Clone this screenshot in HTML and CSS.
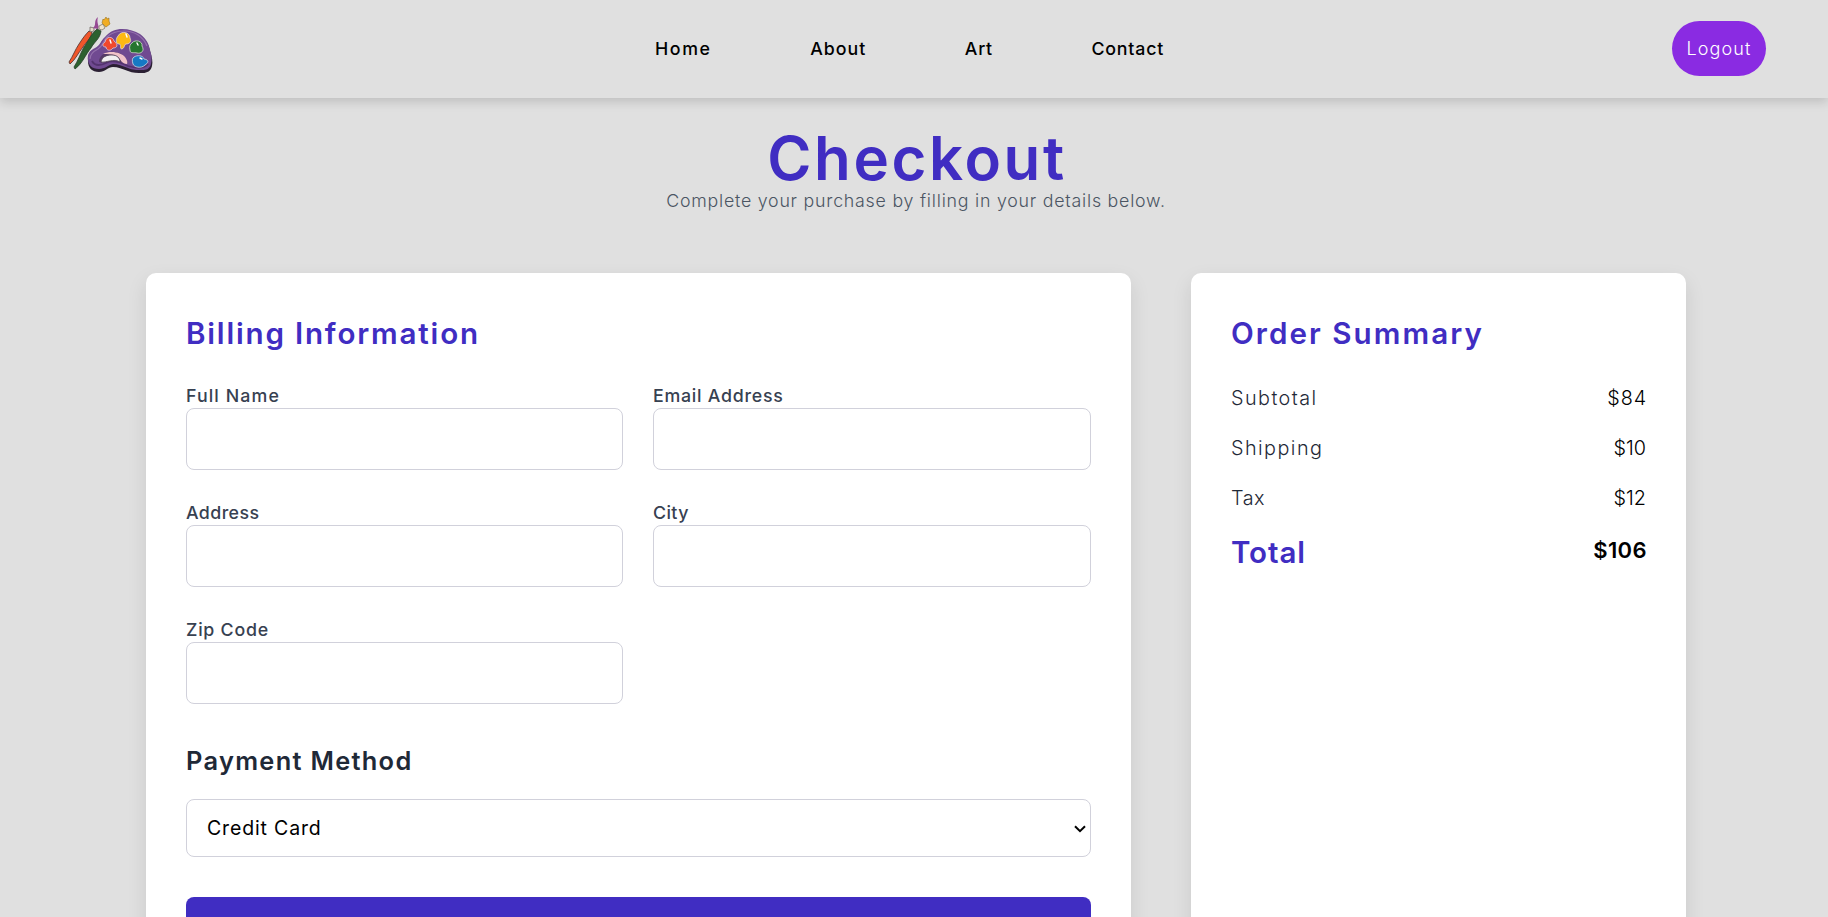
FILE: index.html
```html
<!DOCTYPE html>
<html lang="en">
<head>
<meta charset="utf-8">
<title>Checkout</title>
<link rel="stylesheet" href="styles.css">
</head>
<body>
<header class="navbar">
  <a class="logo" href="#" aria-label="Art store home">
    <svg width="86" height="58" viewBox="0 0 86 58">
      <path d="M20 45C19 38 23 35 27 33C32 31 33 25 37 22C42 16 48 14 54 14C61 14 67 16 72 19C79 24 81 30 82 35C84 41 85 46 84 50C83 55 79 57 75 57C69 57 65 57 60 55C54 53 50 51 45 51C40 51 37 56 31 56C24 56 20 52 20 45Z" fill="#2b2033"/>
      <path d="M20 43C19 37 23 34 27 32C32 30 33 24 37 21C42 15 48 13 54 13C61 13 67 15 72 18C79 23 81 29 82 34C84 40 84 44 83 48C82 53 78 54 74 54C68 54 65 54 60 52C54 50 50 48 45 48C40 49 37 53 31 53C24 53 20 49 20 43Z" fill="#704a91"/>
      <path d="M22 43C22 38 26 35 30 33C35 30 35 25 39 21C44 16 51 15 56 15C66 15 75 20 79 30" fill="none" stroke="#9470ad" stroke-width="1.2"/>
      <path d="M24 45C27 51 34 49 38 47C45 43 54 47 60 50C67 52 76 53 80 48" fill="none" stroke="#54336f" stroke-width="1.8"/>
      <path d="M31 46C31 40 37 35 46 36C54 36 58 41 60 47C54 48 50 44 46 44C41 44 38 48 31 46Z" fill="#563969"/>
      <path d="M35 38C43 34 54 37 57 41C59 44 60 46 59 48C54 48 53 44 50 41C46 38 40 38 35 38Z" fill="#f0c2c9"/>
      <path d="M33 46C34 41 38 39 44 39C49 39 52 42 52 46C46 42 38 47 33 46Z" fill="#f1eff1" stroke="#4c3f50" stroke-width=".8"/>
      <path d="M37 26C38 20 45 20 46 25C51 29 49 32 45 32C42 36 38 34 38 31C34 31 34 28 37 26Z" fill="#f1482d" stroke="#d9c9dd" stroke-width=".8"/>
      <path d="M50 20C53 14 62 16 62 22C64 26 61 28 58 28C56 28 57 32 54 33C51 33 54 28 51 28C47 28 48 22 50 20Z" fill="#fdb913" stroke="#e4d4d2" stroke-width=".8"/>
      <path d="M64 27C67 23 75 25 74 30C77 35 73 38 69 37C66 36 62 38 62 34C61 31 62 28 64 27Z" fill="#26762f" stroke="#d5d9d0" stroke-width=".8"/>
      <path d="M66 41C69 39 75 39 76 43C82 44 80 47 77 49C73 53 66 51 65 48C64 45 64 42 66 41Z" fill="#1679c4" stroke="#cbd9e5" stroke-width=".8"/>
      <path d="M42 24L43 27M58 18L59 21M69 27L70 29M72 42L74 43" fill="none" stroke="#fff" stroke-width="1.4" stroke-linecap="round"/>
      <path d="M21 15L24 16C23 23 18 26 15 31C10 37 8 43 2 48L1 46C5 40 7 34 11 28C15 22 17 19 21 15Z" fill="#f0562b" stroke="#4b312d" stroke-width=".8"/>
      <path d="M22 11L26 12L26 15L22 16Z" fill="#e7dccb" stroke="#665d58" stroke-width=".7"/>
      <path d="M25 12C29 9 25 5 30 1C28 8 32 9 30 13Z" fill="#964993"/>
      <path d="M29 13L33 15C32 23 26 26 23 32C17 39 15 47 7 53L6 51C10 45 12 38 16 31C21 24 23 18 29 13Z" fill="#2c612f" stroke="#293e2b" stroke-width=".8"/>
      <path d="M31 10L35 8L37 12L34 14L31 13Z" fill="#eee3cd" stroke="#746b59" stroke-width=".7"/>
      <path d="M34 7L35 3L36 4L38 1L39 3L41 2L41 5L42 8L38 11Z" fill="#f1ad22" stroke="#9b731c" stroke-width=".6"/>
    </svg>
  </a>
  <nav class="links">
    <a class="link home" href="#">Home</a>
    <a class="link about" href="#">About</a>
    <a class="link art" href="#">Art</a>
    <a class="link contact" href="#">Contact</a>
  </nav>
  <button class="logout">Logout</button>
</header>
<main class="page">
  <div class="intro">
    <h1 class="title">Checkout</h1>
    <p class="subtitle">Complete your purchase by filling in your details below.</p>
  </div>
  <div class="columns">
    <section class="card">
      <h2 class="heading">Billing Information</h2>
      <form>
        <div class="fields">
          <div class="field"><label class="label" for="name">Full Name</label><input class="input" id="name"></div>
          <div class="field"><label class="label email" for="email">Email Address</label><input class="input" id="email"></div>
          <div class="field"><label class="label tight" for="address">Address</label><input class="input" id="address"></div>
          <div class="field"><label class="label tight" for="city">City</label><input class="input" id="city"></div>
          <div class="field"><label class="label email" for="zip">Zip Code</label><input class="input" id="zip"></div>
        </div>
        <h3 class="subheading">Payment Method</h3>
        <div class="select-wrap">
          <select class="select"><option>Credit Card</option></select>
          <svg class="chevron" width="12" height="8" viewBox="0 0 12 8"><path d="M1 1.2L6 6.2L11 1.2" fill="none" stroke="#000" stroke-width="2"/></svg>
        </div>
        <button class="submit" type="button" aria-label="Place order"></button>
      </form>
    </section>
    <section class="card">
      <h2 class="heading order">Order Summary</h2>
      <div class="row"><span class="item">Subtotal</span><span class="price wide">$84</span></div>
      <div class="row"><span class="item">Shipping</span><span class="price">$10</span></div>
      <div class="row"><span class="item tax">Tax</span><span class="price">$12</span></div>
      <div class="row total"><span class="total-label">Total</span><span class="total-price">$106</span></div>
    </section>
  </div>
</main>
</body>
</html>
```

FILE: styles.css
```css
* { box-sizing: border-box; margin: 0; padding: 0; }
body {
  height: 917px;
  overflow: hidden;
  background: #e0e0e0;
  color: #000;
  font-family: Inter, "Liberation Sans", sans-serif;
}
.navbar {
  display: grid;
  grid-template-columns: 587px 1fr auto;
  align-items: center;
  height: 98px;
  padding: 0 62px 2px 68px;
  box-shadow: 0 4px 10px rgba(0, 0, 0, .15);
}
.logo { display: block; height: 58px; margin-top: -7px; }
.links { display: flex; gap: 98.5px; }
.link { color: #000; font-size: 17.8px; font-weight: 450; text-decoration: none; letter-spacing: 1px; }
.home { letter-spacing: 1.6px; }
.art, .contact { letter-spacing: .8px; }
.logout {
  width: 94px;
  height: 55px;
  border: 0;
  border-radius: 28px;
  background: #8a2be2;
  color: #fff;
  font-family: inherit;
  font-size: 18px;
  font-weight: 300;
  letter-spacing: 1.15px;
}
.page { width: 1540px; margin: 0 auto; position: relative; left: 2px; padding-top: 29px; }
.intro { height: 146px; text-align: center; }
.title { font-size: 60px; font-weight: 600; line-height: 62px; letter-spacing: 2.6px; text-indent: 2px; color: #402dc2; }
.subtitle { margin-top: 1px; font-size: 17.8px; font-weight: 300; line-height: 22px; letter-spacing: .77px; color: #4b5563; }
.columns { display: grid; grid-template-columns: 985px 495px; gap: 60px; }
.card {
  height: 720px;
  padding: 40px;
  border-radius: 10px;
  background: #fff;
  box-shadow: 0 8px 20px rgba(0, 0, 0, .1);
}
.heading { height: 70px; font-size: 29.6px; font-weight: 600; line-height: 40px; letter-spacing: 1.8px; color: #402dc2; }
.order { letter-spacing: 2.05px; }
.fields { display: grid; grid-template-columns: 437px 438px; column-gap: 30px; row-gap: 30px; }
.field { height: 87px; }
.label { display: block; height: 25px; font-size: 17.8px; font-weight: 450; line-height: 26px; letter-spacing: 1.1px; color: #374151; }
.email { letter-spacing: .75px; }
.tight { letter-spacing: .4px; }
.input {
  display: block;
  width: 100%;
  height: 62px;
  border: 1px solid #d1d1db;
  border-radius: 8px;
  background: #fff;
  outline: 0;
}
.subheading { margin: 41px 0 22px; font-size: 25.4px; font-weight: 600; line-height: 32px; letter-spacing: 1.3px; color: #1f2937; }
.select-wrap { position: relative; }
.select {
  display: block;
  width: 100%;
  height: 58px;
  padding: 0 0 0 20px;
  border: 1px solid #d1d1db;
  border-radius: 8px;
  background: #fff;
  color: #000;
  font-family: inherit;
  font-size: 19.5px;
  letter-spacing: .85px;
  appearance: none;
}
.chevron { position: absolute; right: 5px; top: 26px; pointer-events: none; }
.submit { display: block; width: 100%; height: 60px; margin-top: 40px; border: 0; border-radius: 8px; background: #402dc2; }
.row { display: flex; justify-content: space-between; height: 50px; font-size: 19.8px; line-height: 30px; }
.item { font-weight: 300; letter-spacing: 1.45px; color: #1f2937; }
.tax { letter-spacing: .5px; }
.price { font-weight: 350; letter-spacing: 0; }
.wide { letter-spacing: .9px; margin-right: -1px; }
.total { font-weight: 600; }
.total-label { font-size: 29.5px; line-height: 39px; letter-spacing: .9px; color: #402dc2; }
.total-price { font-size: 22px; line-height: 34px; letter-spacing: .4px; margin-right: -1px; }
```
